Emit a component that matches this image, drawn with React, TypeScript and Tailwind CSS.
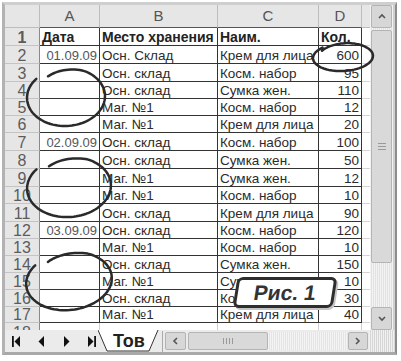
import React from "react";

type Row = { date?: string; place: string; name: string; qty: string; h: string };

const rows: Row[] = [
  { date: "01.09.09", place: "Осн. Склад", name: "Крем для лица", qty: "600", h: "h-[18px]" },
  { place: "Осн. склад", name: "Косм. набор", qty: "95", h: "h-[18px]" },
  { place: "Осн. склад", name: "Сумка жен.", qty: "110", h: "h-[17px]" },
  { place: "Маг. №1", name: "Косм. набор", qty: "12", h: "h-[17px]" },
  { place: "Маг. №1", name: "Крем для лица", qty: "20", h: "h-[17px]" },
  { date: "02.09.09", place: "Осн. склад", name: "Косм. набор", qty: "100", h: "h-[18px]" },
  { place: "Осн. склад", name: "Сумка жен.", qty: "50", h: "h-[18px]" },
  { place: "Маг. №1", name: "Сумка жен.", qty: "12", h: "h-[18px]" },
  { place: "Маг. №1", name: "Косм. набор", qty: "10", h: "h-[17px]" },
  { place: "Осн. склад", name: "Крем для лица", qty: "90", h: "h-[18px]" },
  { date: "03.09.09", place: "Осн. склад", name: "Косм. набор", qty: "120", h: "h-[17px]" },
  { place: "Маг. №1", name: "Косм. набор", qty: "10", h: "h-[17px]" },
  { place: "Осн. склад", name: "Сумка жен.", qty: "150", h: "h-[17px]" },
  { place: "Маг. №1", name: "Сумка жен.", qty: "10", h: "h-[17px]" },
  { place: "Осн. склад", name: "Косм. набор", qty: "30", h: "h-[17px]" },
  { place: "Маг. №1", name: "Крем для лица", qty: "40", h: "h-[16px]" },
];

const rowHead =
  "w-[35px] shrink-0 bg-[#e6e6e6] border-r border-r-[#8a8a8a] border-b border-b-[#c4c4c4] flex items-end justify-center text-[16px] leading-[15px] text-[#5c5c5c] overflow-hidden";
const cell = "border-r border-b border-[#333] flex items-end pb-[1px] leading-none overflow-hidden whitespace-nowrap";

// hand-drawn loop: starts a little inside, swings out and round
const loop = (cx: number, cy: number, rx: number, ry: number, rot: number, a0: number, sweep: number, r0: number) => {
  const pts: string[] = [];
  const c = Math.cos(rot);
  const s = Math.sin(rot);
  for (let i = 0; i <= 96; i++) {
    const t = i / 96;
    const a = a0 + t * sweep;
    const k = r0 + (1 - r0) * Math.min(1, t / 0.18);
    const x = k * rx * Math.cos(a);
    const y = k * ry * Math.sin(a);
    pts.push(`${(cx + x * c - y * s).toFixed(1)} ${(cy + x * s + y * c).toFixed(1)}`);
  }
  return "M" + pts.join(" L");
};

const Chevron = ({ dir }: { dir: "up" | "down" | "left" | "right" }) => {
  const p = {
    up: "1,5 4,2 7,5",
    down: "1,2 4,5 7,2",
    left: "5,1 2,4 5,7",
    right: "2,1 5,4 2,7",
  }[dir];
  return (
    <svg width="8" height="8" viewBox="0 0 8 8">
      <polyline points={p} fill="none" stroke="#555" strokeWidth="1.6" />
    </svg>
  );
};

const Btn = ({ dir, className }: { dir: "up" | "down" | "left" | "right"; className: string }) => (
  <div className={`${className} flex items-center justify-center bg-[#d7d7d7] border border-[#b4b4b4] rounded-[2px]`}>
    <Chevron dir={dir} />
  </div>
);

const Grid = () => (
  <div className="w-[365px] h-[325px] overflow-hidden flex flex-col bg-white">
    <div className="flex h-[23px] shrink-0 bg-[#e6e6e6] text-[15px] text-[#555]">
      <div className="w-[35px] border-r border-b border-[#bdbdbd]" />
      <div className="w-[60px] flex items-center justify-center border-r border-[#bdbdbd] border-b border-b-[#555]">A</div>
      <div className="w-[118px] flex items-center justify-center border-r border-[#bdbdbd] border-b border-b-[#555]">B</div>
      <div className="w-[101px] flex items-center justify-center border-r border-[#bdbdbd] border-b border-b-[#555]">C</div>
      <div className="w-[43px] flex items-center justify-center border-r border-[#bdbdbd] border-b border-b-[#555]">D</div>
      <div className="w-[8px] border-b border-[#bdbdbd]" />
    </div>

    <div className="flex h-[18px] shrink-0 text-[14px] font-bold text-[#222]">
      <div className={rowHead}>1</div>
      <div className={`w-[60px] ${cell} pl-[2px]`}>Дата</div>
      <div className={`w-[118px] ${cell} pl-[2px]`}>Место хранения</div>
      <div className={`w-[101px] ${cell} pl-[2px]`}>Наим.</div>
      <div className={`w-[43px] ${cell} pl-[2px]`}>Кол.</div>
      <div className="w-[8px] border-b border-[#d4d4d4]" />
    </div>

    {rows.map((r, i) => (
      <div key={i} className={`flex ${r.h} shrink-0 text-[13.5px] text-[#2b2b2b]`}>
        <div className={rowHead}>{i + 2}</div>
        <div className={`w-[60px] ${cell} justify-end pr-[2px] text-[13px] text-[#555]`}>{r.date}</div>
        <div className={`w-[118px] ${cell} pl-[2px]`}>{r.place}</div>
        <div className={`w-[101px] ${cell} pl-[2px]`}>{r.name}</div>
        <div className={`w-[43px] ${cell} justify-end pr-[2px]`}>{r.qty}</div>
        <div className="w-[8px] border-b border-[#d4d4d4]" />
      </div>
    ))}

    <div className="flex h-[18px] shrink-0">
      <div className="w-[35px] shrink-0 bg-[#e6e6e6] border-r border-r-[#8a8a8a] flex justify-center pt-[2px] text-[16px] leading-[15px] text-[#5c5c5c]">18</div>
      <div className="w-[60px] border-r border-[#cfcfcf]" />
      <div className="w-[118px] border-r border-[#cfcfcf]" />
      <div className="w-[101px] border-r border-[#cfcfcf]" />
      <div className="w-[43px] border-r border-[#cfcfcf]" />
    </div>
  </div>
);

const VScroll = () => (
  <div className="w-[23px] flex flex-col bg-[repeating-linear-gradient(90deg,#f3f3f3_0px,#f3f3f3_1px,#e2e2e2_1px,#e2e2e2_2px)]">
    <Btn dir="up" className="h-[23px] mx-[1px]" />
    <div className="mt-[2px] mx-[1px] h-[233px] bg-[#d9d9d9] border border-[#b4b4b4] rounded-[2px] flex items-center justify-center">
      <div className="w-[8px] flex flex-col gap-[2px]">
        <div className="h-px bg-[#999]" />
        <div className="h-px bg-[#999]" />
        <div className="h-px bg-[#999]" />
      </div>
    </div>
    <div className="flex-1" />
    <Btn dir="down" className="h-[23px] mx-[1px]" />
  </div>
);

const NavIcon = ({ kind }: { kind: "first" | "prev" | "next" | "last" }) => (
  <svg width="9" height="11" viewBox="0 0 9 11">
    {kind === "first" && (
      <>
        <rect x="0" y="0" width="1.8" height="11" fill="#111" />
        <polygon points="8,0 2.5,5.5 8,11" fill="#111" />
      </>
    )}
    {kind === "prev" && <polygon points="7,0 1.5,5.5 7,11" fill="#111" />}
    {kind === "next" && <polygon points="2,0 7.5,5.5 2,11" fill="#111" />}
    {kind === "last" && (
      <>
        <polygon points="1,0 6.5,5.5 1,11" fill="#111" />
        <rect x="7.2" y="0" width="1.8" height="11" fill="#111" />
      </>
    )}
  </svg>
);

const TabBar = () => (
  <div className="flex h-[22px] bg-[#ebebeb]">
    <div className="w-[93px] flex items-center pl-[7px] gap-[16px]">
      <NavIcon kind="first" />
      <NavIcon kind="prev" />
      <NavIcon kind="next" />
      <NavIcon kind="last" />
    </div>
    <div className="relative w-[65px] flex items-center pl-[15px]">
      <svg className="absolute inset-0" width="65" height="22" viewBox="0 0 65 22">
        <polygon points="0,0 9,21 51,21 60,0" fill="#fff" />
        <polyline points="0,0 9,21 51,21 60,0" fill="none" stroke="#333" strokeWidth="1" />
        <line x1="64.5" y1="1" x2="64.5" y2="22" stroke="#aaa" />
      </svg>
      <span className="relative text-[18px] font-bold leading-none text-[#222]">Тов</span>
    </div>
    <div className="w-[206px] flex items-center">
      <Btn dir="left" className="ml-[2px] w-[21px] h-[18px]" />
      <div className="ml-[2px] w-[80px] h-[18px] bg-[#d9d9d9] border border-[#b4b4b4] rounded-[2px] flex items-center justify-center gap-[2px]">
        <div className="w-px h-[6px] bg-[#999]" />
        <div className="w-px h-[6px] bg-[#999]" />
        <div className="w-px h-[6px] bg-[#999]" />
        <div className="w-px h-[6px] bg-[#999]" />
      </div>
      <div className="flex-1 h-[18px] bg-[repeating-linear-gradient(90deg,#f4f4f4_0px,#f4f4f4_1px,#e4e4e4_1px,#e4e4e4_2px)]" />
      <Btn dir="right" className="mr-[1px] w-[20px] h-[18px]" />
    </div>
    <div className="w-[26px] bg-[repeating-linear-gradient(90deg,#f1f1f1_0px,#f1f1f1_1px,#d6d6d6_1px,#d6d6d6_2px)]" />
  </div>
);

const Marks = () => (
  <>
    <svg className="absolute inset-0 pointer-events-none" width="401" height="361" viewBox="0 0 401 361">
      <g fill="none" stroke="#2a2a2a" strokeWidth="2.5" strokeLinecap="round" strokeLinejoin="round">
        <path d={loop(343, 57, 30, 14, -0.05, -2.5, Math.PI * 2 + 0.2, 0.86)} />
        <path d={loop(66, 97, 39, 29, -0.05, -2.1, Math.PI * 2 - 0.3, 0.86)} />
        <path d={loop(69, 187, 42, 30, -0.08, -2.1, Math.PI * 2 - 0.3, 0.86)} />
        <path d={loop(69, 281, 43, 29, -0.12, -2.1, Math.PI * 2 - 0.3, 0.86)} />
      </g>
    </svg>
    <div className="absolute left-[235px] top-[277px] w-[100px] h-[31px] skew-x-[-9deg] rounded-[6px] border-[3px] border-[#2e2e2e] bg-white shadow-[2px_2px_0_#c4c4c4] flex items-center justify-center">
      <span className="text-[21px] font-bold leading-none text-[#333]">Рис. 1</span>
    </div>
  </>
);

export default function App() {
  return (
    <div className="relative w-[401px] h-[361px] bg-white overflow-hidden font-['Liberation_Sans',Arial,sans-serif]">
      <div className="ml-[2px] mt-[2px] w-[395px] h-[353px] flex flex-col border-l-[3px] border-t-[3px] border-r-[2px] border-b-[3px] border-l-[#b3b3b3] border-t-[#cfcfcf] border-r-[#8d8d8d] border-b-[#a9a9a9]">
        <div className="flex h-[325px]">
          <Grid />
          <VScroll />
          <div className="w-[2px] bg-[#cfcfcf]" />
        </div>
        <TabBar />
      </div>
      <Marks />
    </div>
  );
}
